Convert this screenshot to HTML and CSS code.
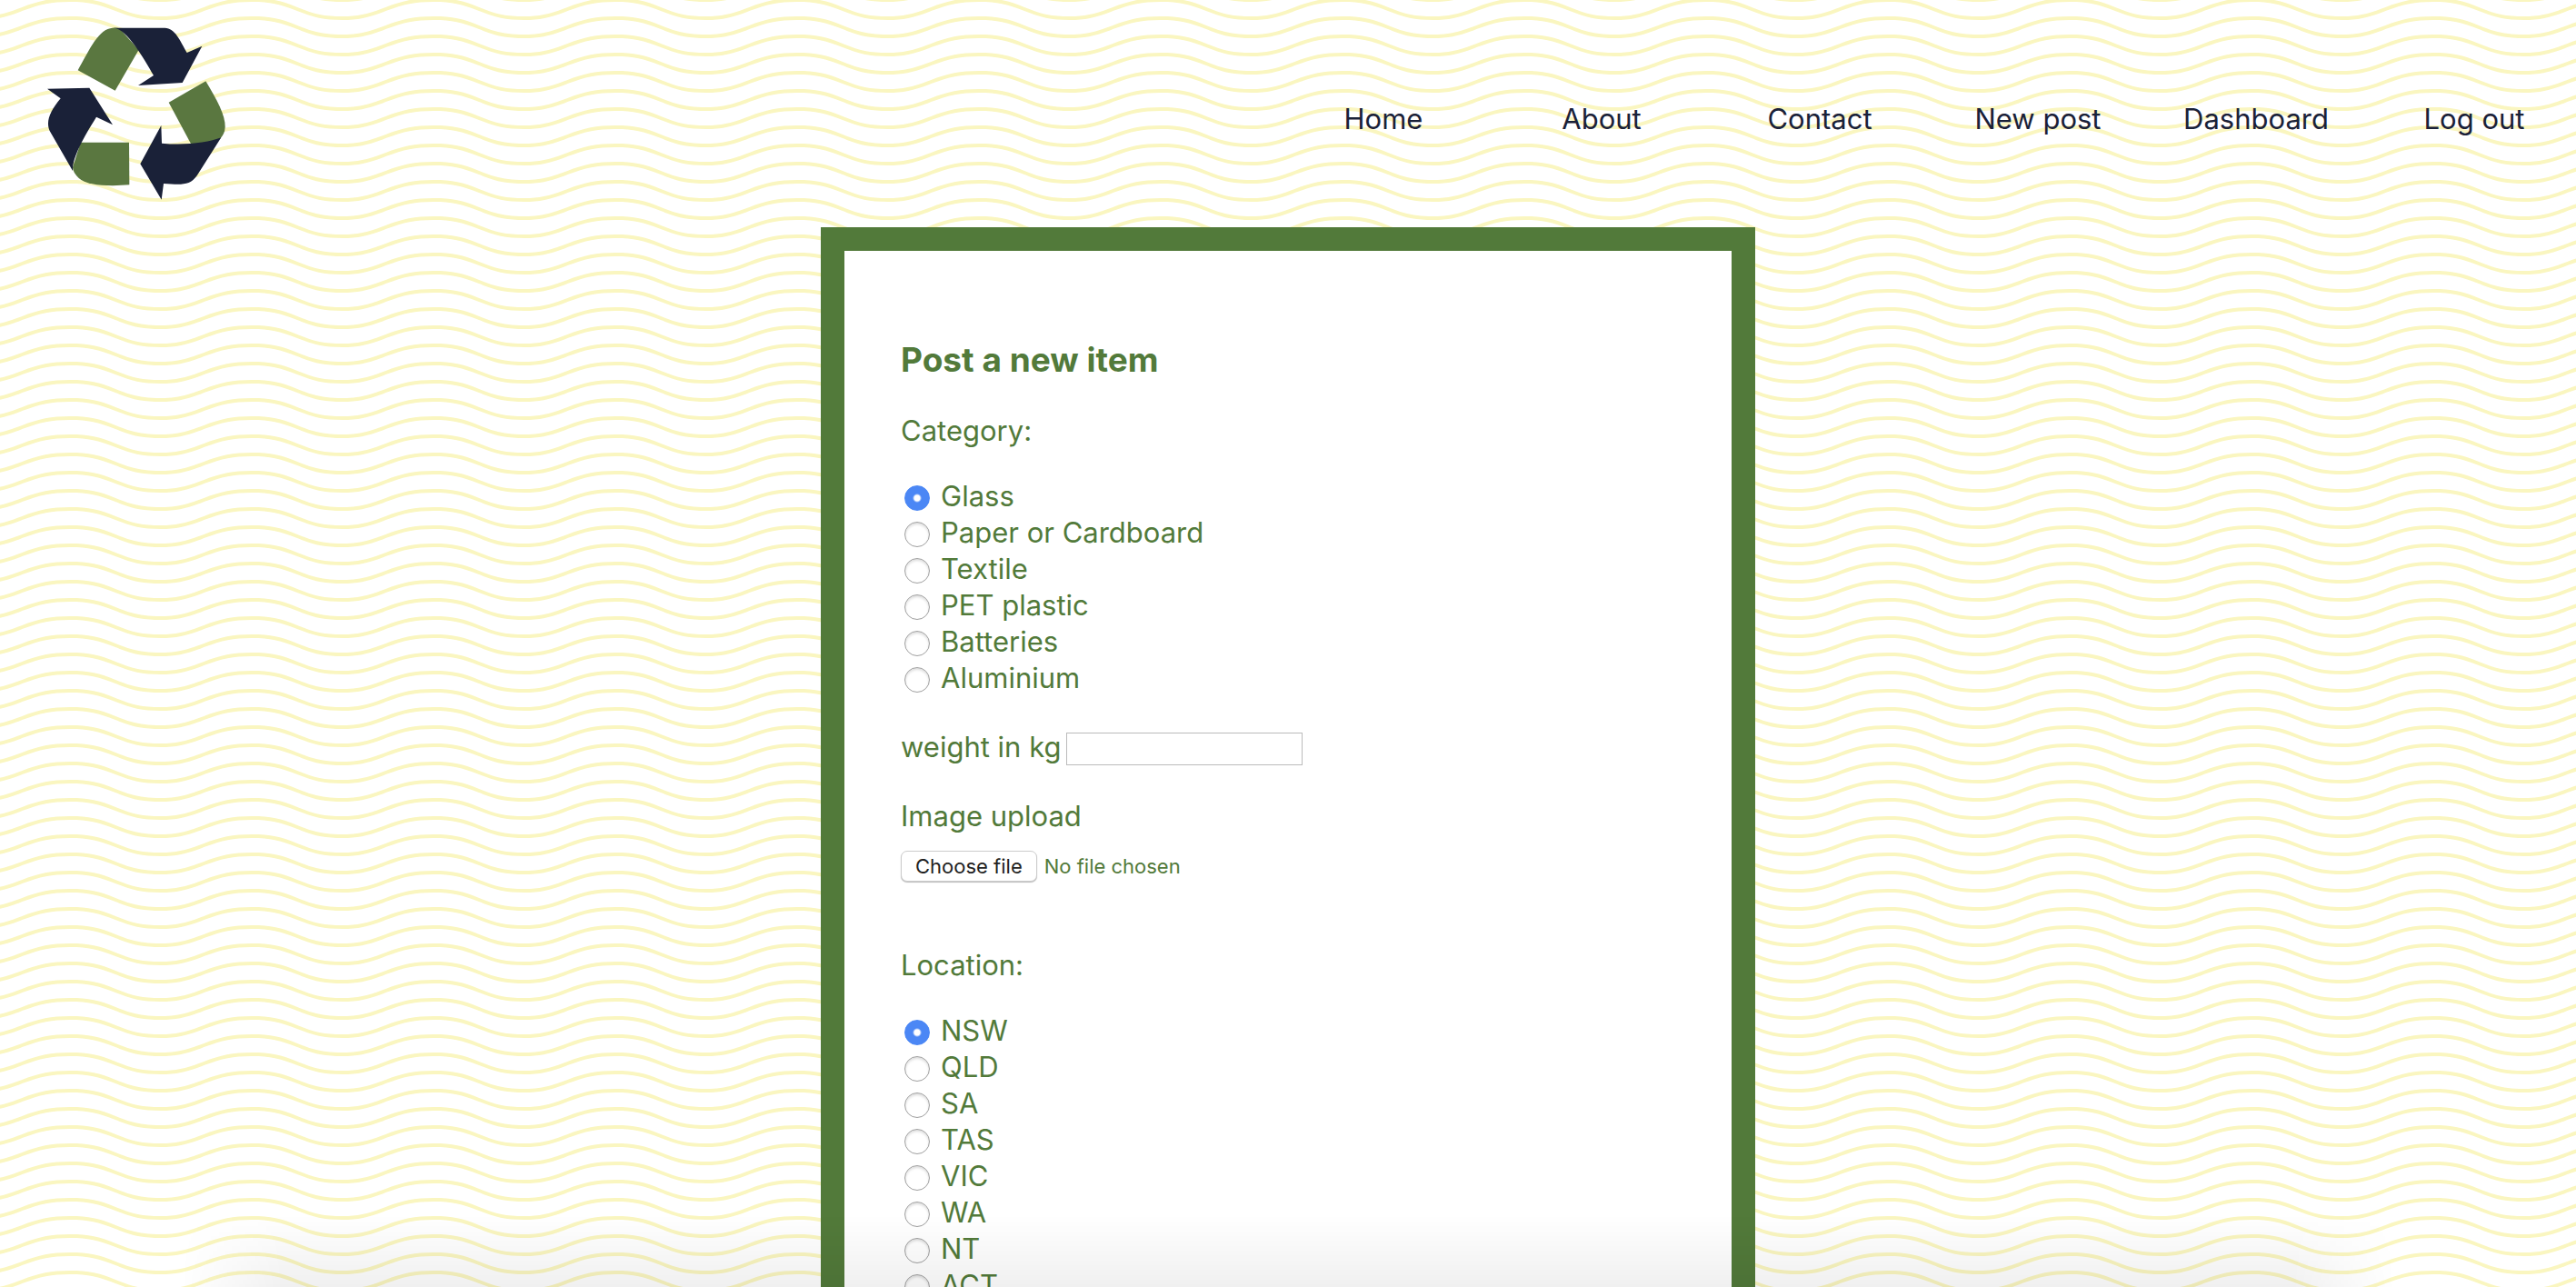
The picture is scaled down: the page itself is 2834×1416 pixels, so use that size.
FILE: index.html
```html
<!DOCTYPE html>
<html lang="en">
<head>
  <meta charset="utf-8">
  <title>Post a new item</title>
  <link rel="stylesheet" href="styles.css">
</head>
<body>
  <header class="site-header">
    <a class="logo" href="#" aria-label="Home page">
      <svg class="logo-mark" viewBox="0 0 588 570" aria-hidden="true">
        <g fill="#5a7740">
          <path d="M101 142 C140 72 170 4 216 2 Q232 1 240 6 L302 74 L224 209Z"/>
          <path d="M401 248 L523 178 C560 240 588 290 587 330 Q586 352 570 368 L540 386 L475 386Z"/>
          <path d="M110 380 L270 380 L271 520 C200 526 130 522 104 498 Q84 478 84 462Z"/>
        </g>
        <g fill="#1a2138">
          <path d="M220 2 L388 2 C422 2 438 44 461 84 L511 62 L446 183 L300 192 L351 159 C320 104 262 4 220 2Z"/>
          <path d="M0 203 L139 200 L216 322 L162 296 C120 364 82 430 84 474 L8 342 C-6 310 10 276 44 235Z"/>
          <path d="M307 451 L376 324 L378 383 C450 390 530 382 574 364 L494 490 C470 524 440 520 384 516 L377 569Z"/>
        </g>
      </svg>
    </a>
    <nav class="site-nav">
      <a href="#">Home</a>
      <a href="#">About</a>
      <a href="#">Contact</a>
      <a href="#">New post</a>
      <a href="#">Dashboard</a>
      <a href="#">Log out</a>
    </nav>
  </header>

  <main class="card">
    <form class="post-form">
      <h1>Post a new item</h1>
      <fieldset>
        <legend>Category:</legend>
        <label class="option"><input type="radio" name="category" checked>Glass</label>
        <label class="option"><input type="radio" name="category">Paper or Cardboard</label>
        <label class="option"><input type="radio" name="category">Textile</label>
        <label class="option"><input type="radio" name="category">PET plastic</label>
        <label class="option"><input type="radio" name="category">Batteries</label>
        <label class="option"><input type="radio" name="category">Aluminium</label>
      </fieldset>
      <div class="weight">
        <label for="weight">weight in kg</label>
        <input type="text" id="weight">
      </div>
      <div class="upload">
        <label for="image">Image upload</label>
        <div class="file-picker">
          <button type="button" id="image">Choose file</button>
          <span>No file chosen</span>
        </div>
      </div>
      <fieldset>
        <legend>Location:</legend>
        <label class="option"><input type="radio" name="location" checked>NSW</label>
        <label class="option"><input type="radio" name="location">QLD</label>
        <label class="option"><input type="radio" name="location">SA</label>
        <label class="option"><input type="radio" name="location">TAS</label>
        <label class="option"><input type="radio" name="location">VIC</label>
        <label class="option"><input type="radio" name="location">WA</label>
        <label class="option"><input type="radio" name="location">NT</label>
        <label class="option"><input type="radio" name="location">ACT</label>
      </fieldset>
    </form>
  </main>
  <div class="bottom-shade"></div>
</body>
</html>
```
FILE: styles.css
```css
* {
  box-sizing: border-box;
}

html {
  scrollbar-width: none;
}

body {
  margin: 0;
  color: #527a3a;
  font-family: Inter, "Liberation Sans", sans-serif;
  font-size: 31px;
  line-height: 40px;
  background-color: #fff;
  background-image: url("data:image/svg+xml,%3Csvg xmlns='http://www.w3.org/2000/svg' width='100' height='20' viewBox='0 0 100 20'%3E%3Cpath fill='%23faf6c0' d='M21.184 20c.357-.13.72-.264 1.088-.402l1.768-.661C33.64 15.347 39.647 14 50 14c10.271 0 15.362 1.222 24.629 4.928.955.383 1.869.74 2.75 1.072h6.225c-2.51-.73-5.139-1.691-8.233-2.928C65.888 13.278 60.562 12 50 12c-10.626 0-16.855 1.397-26.66 5.063l-1.767.662c-2.475.923-4.66 1.674-6.724 2.275h6.335zm0-20C13.258 2.892 8.077 4 0 4V2c5.744 0 9.951-.574 14.85-2h6.334zM77.38 0C85.239 2.966 90.502 4 100 4V2c-6.842 0-11.386-.542-16.396-2h-6.225zM0 14c8.44 0 13.718-1.21 22.272-4.402l1.768-.661C33.64 5.347 39.647 4 50 4c10.271 0 15.362 1.222 24.629 4.928C84.112 12.722 89.438 14 100 14v-2c-10.271 0-15.362-1.222-24.629-4.928C65.888 3.278 60.562 2 50 2 39.374 2 33.145 3.397 23.34 7.063l-1.767.662C13.223 10.84 8.163 12 0 12v2z'/%3E%3C/svg%3E");
  background-size: 200px 40px;
  background-position: -23px -6px;
}

.site-header {
  display: flex;
  align-items: center;
  justify-content: space-between;
  padding: 30px 0 30px 52px;
}

.logo {
  display: block;
}

.logo-mark {
  display: block;
  width: 196px;
  height: 190px;
}

.site-nav {
  display: flex;
  gap: 16px;
  padding-top: 12px;
}

.site-nav a {
  width: 224px;
  color: #1a2138;
  text-align: center;
  text-decoration: none;
}

.card {
  width: min(100%, 1028px);
  margin: 0 auto;
  padding: 96px 62px;
  background: #fff;
  border: 26px solid #527a3a;
}

.post-form {
  display: flex;
  flex-direction: column;
}

h1 {
  margin: 0 0 34px;
  font-size: 37px;
  line-height: 48px;
}

fieldset {
  min-width: 0;
  margin: 0;
  padding: 0;
  border: 0;
}

legend {
  padding: 0;
  margin-bottom: 32px;
}

.option {
  display: flex;
  align-items: center;
  gap: 12px;
  padding-left: 4px;
}

input[type="radio"] {
  appearance: none;
  width: 28px;
  height: 28px;
  margin: 4px 0 0;
  background: #fff;
  border: 1px solid #a0a0a0;
  border-radius: 50%;
  box-shadow: inset 0 2px 3px #ddd;
}

input[type="radio"]:checked {
  background: radial-gradient(circle, #fff 3px, #4b87f5 5px);
  border-color: #4b87f5;
  box-shadow: none;
}

.weight {
  display: flex;
  align-items: center;
  gap: 6px;
  margin-top: 36px;
}

.weight input {
  width: 260px;
  height: 36px;
  margin: 4px 0 0;
  padding: 2px 6px;
  font: inherit;
  font-size: 22px;
  background: #fff;
  border: 1px solid #bbb;
}

.upload {
  margin: 36px 0 72px;
}

.file-picker {
  display: flex;
  align-items: center;
  gap: 8px;
  margin-top: 18px;
  font-size: 22px;
  line-height: 28px;
}

.file-picker button {
  padding: 2px 15px;
  color: #222;
  font: inherit;
  background: #fff;
  border: 1px solid #ccc;
  border-radius: 7px;
  box-shadow: 0 1px 1px #bbb;
}

/* soft shade that rises from the lower edge of the window */
.bottom-shade {
  position: fixed;
  right: 0;
  bottom: 0;
  left: 0;
  height: 80px;
  background: linear-gradient(transparent, rgba(0, 0, 0, 0.06));
  mask-image: linear-gradient(90deg, transparent 7%, #000 11%, #000 89%, transparent 93%);
  pointer-events: none;
}
```
